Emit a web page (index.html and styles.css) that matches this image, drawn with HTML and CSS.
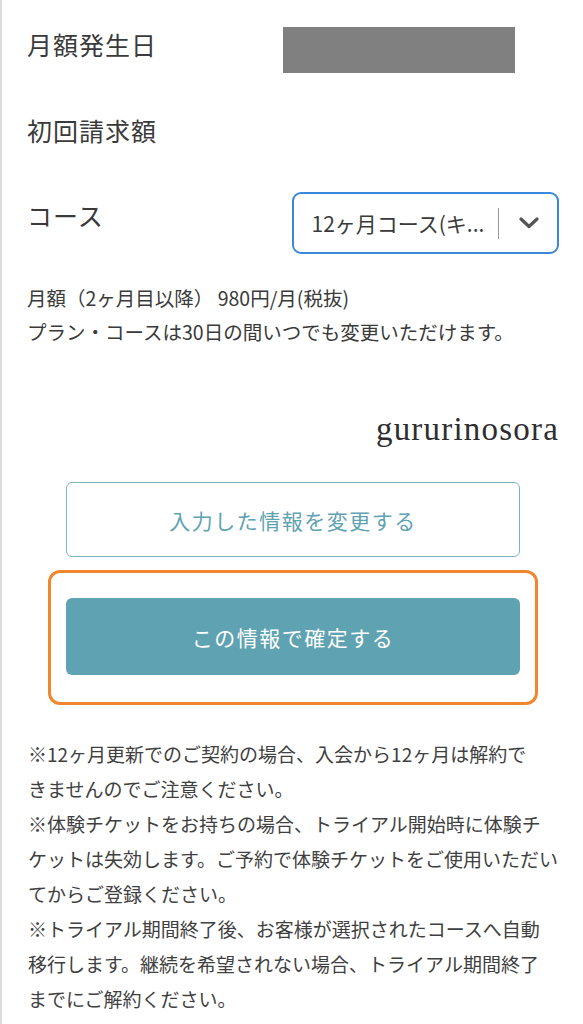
FILE: index.html
```html
<!DOCTYPE html>
<html lang="ja">

<head>
    <meta charset="UTF-8">
    <meta name="viewport" content="width=device-width, initial-scale=1.0">
    <title>お申し込み内容の確認</title>
    <link rel="stylesheet" href="styles.css">
</head>

<body>
    <div class="page">
        <div class="info">
            <div class="info-row row-date">
                <span class="info-label">月額発生日</span>
                <span class="masked"></span>
            </div>
            <div class="info-row row-price">
                <span class="info-label">初回請求額</span>
            </div>
            <div class="info-row row-course">
                <span class="info-label">コース</span>
                <div class="course-select">
                    <span class="course-value">12ヶ月コース(キ...</span>
                    <span class="course-divider"></span>
                    <svg class="course-arrow" width="20" height="12" viewBox="0 0 20 12">
                        <path d="M2 2 L10 9.5 L18 2" fill="none" stroke="#555" stroke-width="3.2" stroke-linecap="round" stroke-linejoin="round"/>
                    </svg>
                </div>
            </div>
        </div>

        <p class="course-note">
            月額（2ヶ月目以降） 980円/月(税抜)<br>
            プラン・コースは30日の間いつでも変更いただけます。
        </p>

        <div class="signature">gururinosora</div>

        <div class="actions">
            <button class="btn btn-outline">入力した情報を変更する</button>
            <div class="highlight">
                <button class="btn btn-primary">この情報で確定する</button>
            </div>
        </div>

        <div class="notes">
            <p>※12ヶ月更新でのご契約の場合、入会から12ヶ月は解約で<br>きませんのでご注意ください。</p>
            <p>※体験チケットをお持ちの場合、トライアル開始時に体験チ<br>ケットは失効します。ご予約で体験チケットをご使用いただい<br>てからご登録ください。</p>
            <p>※トライアル期間終了後、お客様が選択されたコースへ自動<br>移行します。継続を希望されない場合、トライアル期間終了<br>までにご解約ください。</p>
        </div>
    </div>
</body>
</html>
```

FILE: styles.css
```css
:root {
    --text-color: #3a3a3a;
    --teal: #5fa3b2;
    --teal-light: #7db3bf;
    --orange: #f0862e;
    --focus-blue: #3a88db;
}

* {
    box-sizing: border-box;
    margin: 0;
    padding: 0;
}

body {
    font-family: 'Noto Sans CJK JP', 'Noto Sans', sans-serif;
    color: var(--text-color);
    background-color: #fff;
    border-left: 2px solid #dcdcdc;
    min-height: 1024px;
}

.page {
    padding: 0 24px 0 25px;
}

.info {
    padding-top: 27px;
}

.info-row {
    display: flex;
    align-items: flex-start;
}

.info-label {
    width: 256px;
    font-size: 25px;
    letter-spacing: 1px;
}

.row-date .info-label {
    line-height: 34px;
}

.masked {
    width: 232px;
    height: 46px;
    background-color: #808080;
}

.row-price {
    margin-top: 40px;
}

.row-price .info-label {
    line-height: 34px;
}

.row-course {
    margin-top: 45px;
}

.row-course .info-label {
    line-height: 46px;
}

.course-select {
    display: flex;
    align-items: center;
    width: 267px;
    height: 62px;
    margin-left: 10px;
    padding-left: 17px;
    border: 2.5px solid var(--focus-blue);
    border-radius: 9px;
}

.course-value {
    width: 187px;
    font-size: 21px;
    white-space: nowrap;
    overflow: hidden;
}

.course-divider {
    width: 1px;
    height: 31px;
    background-color: #9a9a9a;
}

.course-arrow {
    margin-left: 20px;
}

.course-note {
    margin-top: 27px;
    font-size: 19.5px;
    line-height: 34px;
}

.signature {
    margin-top: 60px;
    text-align: right;
    font-family: 'Liberation Serif', serif;
    font-size: 33px;
    letter-spacing: 1.2px;
    line-height: 40px;
    color: #2e2e2e;
}

.actions {
    margin-top: 33px;
}

.btn {
    display: block;
    width: 454px;
    margin: 0 auto;
    font-family: inherit;
    font-size: 21px;
    letter-spacing: 1.5px;
    border-radius: 6px;
    cursor: pointer;
}

.btn-outline {
    height: 75px;
    background-color: #fff;
    color: var(--teal);
    border: 1.5px solid var(--teal-light);
}

.highlight {
    width: 490px;
    margin: 13px auto 0;
    padding: 25px 0 27px;
    border: 3px solid var(--orange);
    border-radius: 12px;
}

.btn-primary {
    height: 77px;
    background-color: var(--teal);
    color: #fff;
    border: none;
}

.notes {
    margin-top: 31px;
    padding-left: 1px;
    font-size: 19px;
    line-height: 35px;
    color: #404040;
}
```
